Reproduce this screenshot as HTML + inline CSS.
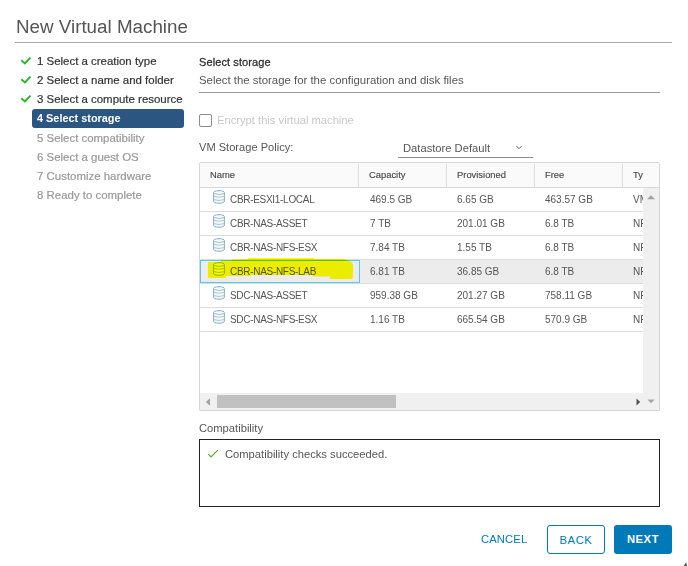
<!DOCTYPE html>
<html>
<head>
<meta charset="utf-8">
<style>
html,body{margin:0;padding:0;background:#fff;}
body{width:688px;height:566px;position:relative;overflow:hidden;font-family:"Liberation Sans",sans-serif;color:#565656;}
.a{position:absolute;white-space:nowrap;line-height:1;}
.title{left:16px;top:18px;font-size:18.8px;color:#555;}
.hr1{position:absolute;left:15px;top:42px;width:657px;height:1px;background:#a8a8a8;}
.nav{left:37px;font-size:11.45px;color:#333;-webkit-text-stroke:0.2px currentColor;}
.nav.dis{color:#999;}
.chk{position:absolute;left:20px;width:12px;height:9px;}
.active{position:absolute;left:32px;top:109px;width:152px;height:19px;background:#2b5681;border-radius:3px;}
.nav.act{color:#fff;font-weight:bold;font-size:10.9px;-webkit-text-stroke:0;}
.h2{left:199px;top:57px;font-size:11px;letter-spacing:0.1px;color:#333;-webkit-text-stroke:0.3px #333;}
.sub{left:199px;top:75px;font-size:11.4px;color:#565656;}
.hr2{position:absolute;left:199px;top:92px;width:461px;height:1px;background:#9a9a9a;}
.cb{position:absolute;left:199px;top:114px;width:11px;height:11px;border:1px solid #8c8c8c;border-radius:2px;}
.enc{left:217px;top:115px;font-size:11.2px;color:#c8c8c8;}
.pol{left:199px;top:142px;font-size:11.1px;color:#565656;}
.dd{left:403px;top:143px;font-size:11.2px;color:#565656;}
.ddl{position:absolute;left:398px;top:157px;width:135px;height:1px;background:#8c8c8c;}
.tbl{position:absolute;left:199px;top:162px;width:459px;height:247px;border:1px solid #d7d7d7;border-radius:2px 2px 0 0;overflow:hidden;background:#fff;}
.theadbg{position:absolute;left:0;top:0;width:459px;height:24px;background:#fafafa;border-bottom:1px solid #d7d7d7;}
.thead{position:absolute;left:0;top:0;width:443px;overflow:hidden;height:24px;background:#fafafa;border-bottom:1px solid #d7d7d7;}
.th{position:absolute;top:7px;font-size:9.4px;color:#4a4a4a;-webkit-text-stroke:0.15px #4a4a4a;line-height:1;white-space:nowrap;}
.vd{position:absolute;top:1px;width:1px;height:23px;background:#dcdcdc;}
.row{position:absolute;left:0;width:459px;height:23px;border-bottom:1px solid #dcdcdc;}
.td{position:absolute;top:7px;font-size:10px;letter-spacing:-0.3px;color:#565656;line-height:1;white-space:nowrap;}
.ico{position:absolute;left:13px;top:2px;width:12px;height:14px;}
.vs{position:absolute;left:443px;top:25px;width:16px;height:206px;background:#f0f0f0;}
.hs{position:absolute;left:0;top:230px;width:459px;height:17px;background:#f0f0f0;}
.thumb{position:absolute;left:17px;top:2px;width:179px;height:13px;background:#c1c1c1;}
.clbl{left:199px;top:423px;font-size:11.2px;color:#565656;}
.cbox{position:absolute;left:199px;top:439px;width:459px;height:66px;border:1px solid #222;}
.ctext{left:225px;top:448.5px;font-size:11.2px;color:#565656;}
.btn{position:absolute;top:525px;height:29px;border-radius:3px;box-sizing:border-box;font-size:11.2px;letter-spacing:0.6px;line-height:28px;text-align:center;}
</style>
</head>
<body>
<div class="a title">New Virtual Machine</div>
<div class="hr1"></div>

<!-- nav -->
<svg class="chk" style="top:56px" viewBox="0 0 12 9"><path d="M1.3 4.2 L4.9 7.4 L10.5 1.6" stroke="#2fb32f" stroke-width="2" fill="none"/></svg>
<svg class="chk" style="top:75px" viewBox="0 0 12 9"><path d="M1.3 4.2 L4.9 7.4 L10.5 1.6" stroke="#2fb32f" stroke-width="2" fill="none"/></svg>
<svg class="chk" style="top:94px" viewBox="0 0 12 9"><path d="M1.3 4.2 L4.9 7.4 L10.5 1.6" stroke="#2fb32f" stroke-width="2" fill="none"/></svg>
<div class="a nav" style="top:56px">1 Select a creation type</div>
<div class="a nav" style="top:75px">2 Select a name and folder</div>
<div class="a nav" style="top:94px">3 Select a compute resource</div>
<div class="active"></div>
<div class="a nav act" style="top:113px">4 Select storage</div>
<div class="a nav dis" style="top:133px">5 Select compatibility</div>
<div class="a nav dis" style="top:152px">6 Select a guest OS</div>
<div class="a nav dis" style="top:171px">7 Customize hardware</div>
<div class="a nav dis" style="top:190px">8 Ready to complete</div>

<!-- content -->
<div class="a h2">Select storage</div>
<div class="a sub">Select the storage for the configuration and disk files</div>
<div class="hr2"></div>
<div class="cb"></div>
<div class="a enc">Encrypt this virtual machine</div>
<div class="a pol">VM Storage Policy:</div>
<div class="a dd">Datastore Default</div>
<svg style="position:absolute;left:515px;top:145px" width="8" height="5" viewBox="0 0 8 5"><path d="M1.5 1.2 L4 3.7 L6.5 1.2" stroke="#666" stroke-width="1" fill="none"/></svg>
<div class="ddl"></div>

<div class="tbl">
  <div class="theadbg"></div>
  <div class="thead">
    <div class="th" style="left:10px">Name</div>
    <div class="vd" style="left:158px"></div>
    <div class="th" style="left:169px">Capacity</div>
    <div class="vd" style="left:246px"></div>
    <div class="th" style="left:257px">Provisioned</div>
    <div class="vd" style="left:334px"></div>
    <div class="th" style="left:345px">Free</div>
    <div class="vd" style="left:422px"></div>
    <div class="th" style="left:433px">Typ</div>
  </div>
  <div class="row" style="top:25px;">
    <svg class="ico" viewBox="0 0 12 14"><path d="M0.6 2.8 Q0.6 0.7 6 0.7 Q11.4 0.7 11.4 2.8 L11.4 11 Q11.4 13.2 6 13.2 Q0.6 13.2 0.6 11 Z" fill="#f6f9fb" stroke="#8eaec2" stroke-width="1"/><path d="M1 3.6 Q6 5.4 11 3.6" fill="none" stroke="#9ab8ca" stroke-width="0.9"/><path d="M1 6.4 Q6 8.2 11 6.4" fill="none" stroke="#a5bfcf" stroke-width="0.9"/><path d="M1 9.6 Q6 11.4 11 9.6" fill="none" stroke="#a5bfcf" stroke-width="0.9"/></svg>
    <div class="td" style="left:30px">CBR-ESXI1-LOCAL</div>
    <div class="td" style="left:170px;letter-spacing:0">469.5 GB</div>
    <div class="td" style="left:257px;letter-spacing:0">6.65 GB</div>
    <div class="td" style="left:345px;letter-spacing:0">463.57 GB</div>
    <div class="td" style="left:433px;letter-spacing:0">VMFS</div>
  </div>
  <div class="row" style="top:49px;">
    <svg class="ico" viewBox="0 0 12 14"><path d="M0.6 2.8 Q0.6 0.7 6 0.7 Q11.4 0.7 11.4 2.8 L11.4 11 Q11.4 13.2 6 13.2 Q0.6 13.2 0.6 11 Z" fill="#f6f9fb" stroke="#8eaec2" stroke-width="1"/><path d="M1 3.6 Q6 5.4 11 3.6" fill="none" stroke="#9ab8ca" stroke-width="0.9"/><path d="M1 6.4 Q6 8.2 11 6.4" fill="none" stroke="#a5bfcf" stroke-width="0.9"/><path d="M1 9.6 Q6 11.4 11 9.6" fill="none" stroke="#a5bfcf" stroke-width="0.9"/></svg>
    <div class="td" style="left:30px">CBR-NAS-ASSET</div>
    <div class="td" style="left:170px;letter-spacing:0">7 TB</div>
    <div class="td" style="left:257px;letter-spacing:0">201.01 GB</div>
    <div class="td" style="left:345px;letter-spacing:0">6.8 TB</div>
    <div class="td" style="left:433px;letter-spacing:0">NFS</div>
  </div>
  <div class="row" style="top:73px;">
    <svg class="ico" viewBox="0 0 12 14"><path d="M0.6 2.8 Q0.6 0.7 6 0.7 Q11.4 0.7 11.4 2.8 L11.4 11 Q11.4 13.2 6 13.2 Q0.6 13.2 0.6 11 Z" fill="#f6f9fb" stroke="#8eaec2" stroke-width="1"/><path d="M1 3.6 Q6 5.4 11 3.6" fill="none" stroke="#9ab8ca" stroke-width="0.9"/><path d="M1 6.4 Q6 8.2 11 6.4" fill="none" stroke="#a5bfcf" stroke-width="0.9"/><path d="M1 9.6 Q6 11.4 11 9.6" fill="none" stroke="#a5bfcf" stroke-width="0.9"/></svg>
    <div class="td" style="left:30px">CBR-NAS-NFS-ESX</div>
    <div class="td" style="left:170px;letter-spacing:0">7.84 TB</div>
    <div class="td" style="left:257px;letter-spacing:0">1.55 TB</div>
    <div class="td" style="left:345px;letter-spacing:0">6.8 TB</div>
    <div class="td" style="left:433px;letter-spacing:0">NFS</div>
  </div>
  <div class="row" style="top:97px;background:#ececec;">
    <svg class="ico" viewBox="0 0 12 14"><path d="M0.6 2.8 Q0.6 0.7 6 0.7 Q11.4 0.7 11.4 2.8 L11.4 11 Q11.4 13.2 6 13.2 Q0.6 13.2 0.6 11 Z" fill="#f6f9fb" stroke="#8eaec2" stroke-width="1"/><path d="M1 3.6 Q6 5.4 11 3.6" fill="none" stroke="#9ab8ca" stroke-width="0.9"/><path d="M1 6.4 Q6 8.2 11 6.4" fill="none" stroke="#a5bfcf" stroke-width="0.9"/><path d="M1 9.6 Q6 11.4 11 9.6" fill="none" stroke="#a5bfcf" stroke-width="0.9"/></svg>
    <div class="td" style="left:30px">CBR-NAS-NFS-LAB</div>
    <div class="td" style="left:170px;letter-spacing:0">6.81 TB</div>
    <div class="td" style="left:257px;letter-spacing:0">36.85 GB</div>
    <div class="td" style="left:345px;letter-spacing:0">6.8 TB</div>
    <div class="td" style="left:433px;letter-spacing:0">NFS</div>
  </div>
  <div class="row" style="top:121px;">
    <svg class="ico" viewBox="0 0 12 14"><path d="M0.6 2.8 Q0.6 0.7 6 0.7 Q11.4 0.7 11.4 2.8 L11.4 11 Q11.4 13.2 6 13.2 Q0.6 13.2 0.6 11 Z" fill="#f6f9fb" stroke="#8eaec2" stroke-width="1"/><path d="M1 3.6 Q6 5.4 11 3.6" fill="none" stroke="#9ab8ca" stroke-width="0.9"/><path d="M1 6.4 Q6 8.2 11 6.4" fill="none" stroke="#a5bfcf" stroke-width="0.9"/><path d="M1 9.6 Q6 11.4 11 9.6" fill="none" stroke="#a5bfcf" stroke-width="0.9"/></svg>
    <div class="td" style="left:30px">SDC-NAS-ASSET</div>
    <div class="td" style="left:170px;letter-spacing:0">959.38 GB</div>
    <div class="td" style="left:257px;letter-spacing:0">201.27 GB</div>
    <div class="td" style="left:345px;letter-spacing:0">758.11 GB</div>
    <div class="td" style="left:433px;letter-spacing:0">NFS</div>
  </div>
  <div class="row" style="top:145px;">
    <svg class="ico" viewBox="0 0 12 14"><path d="M0.6 2.8 Q0.6 0.7 6 0.7 Q11.4 0.7 11.4 2.8 L11.4 11 Q11.4 13.2 6 13.2 Q0.6 13.2 0.6 11 Z" fill="#f6f9fb" stroke="#8eaec2" stroke-width="1"/><path d="M1 3.6 Q6 5.4 11 3.6" fill="none" stroke="#9ab8ca" stroke-width="0.9"/><path d="M1 6.4 Q6 8.2 11 6.4" fill="none" stroke="#a5bfcf" stroke-width="0.9"/><path d="M1 9.6 Q6 11.4 11 9.6" fill="none" stroke="#a5bfcf" stroke-width="0.9"/></svg>
    <div class="td" style="left:30px">SDC-NAS-NFS-ESX</div>
    <div class="td" style="left:170px;letter-spacing:0">1.16 TB</div>
    <div class="td" style="left:257px;letter-spacing:0">665.54 GB</div>
    <div class="td" style="left:345px;letter-spacing:0">570.9 GB</div>
    <div class="td" style="left:433px;letter-spacing:0">NFS</div>
  </div>
  <div class="sel" style="position:absolute;left:0;top:97px;width:158px;height:21px;border:1px solid #55c8f0;"></div>
  <div class="vs"><svg style="position:absolute;left:4px;top:7px" width="8" height="5" viewBox="0 0 8 5"><path d="M0 4.2 L4 0.2 L8 4.2 Z" fill="#a3a3a3"/></svg></div>
  <div class="hs"><div class="thumb"></div><svg style="position:absolute;left:5px;top:5px" width="6" height="8" viewBox="0 0 6 8"><path d="M5 0.3 L0.8 4 L5 7.7 Z" fill="#a3a3a3"/></svg><svg style="position:absolute;left:436px;top:5px" width="5" height="8" viewBox="0 0 5 8"><path d="M0.5 0.5 L4.2 4 L0.5 7.5 Z" fill="#505050"/></svg><svg style="position:absolute;left:447px;top:6px" width="8" height="5" viewBox="0 0 8 5"><path d="M0.5 0.5 L4 4.2 L7.5 0.5 Z" fill="#a3a3a3"/></svg></div>
</div>

<svg style="position:absolute;left:0;top:0;mix-blend-mode:multiply;pointer-events:none" width="688" height="566"><path d="M208 262 L221 262 L221 260.6 L232 260.6 L232 259.5 L248 259.3 L248 258 L314 258 L314 259 L344 259 L348 260.5 L351.5 262 L353 265 L353 272 L352.5 279 L330 279 L330 276.6 L313 276.6 L313 275 L250 275 L250 276 L226 276 L226 278 L208 278 Z" fill="#ffff00"/></svg>
<div class="a clbl">Compatibility</div>
<div class="cbox"></div>
<svg style="position:absolute;left:207px;top:449px" width="12" height="10" viewBox="0 0 12 10"><path d="M1.3 5.2 L4 8 L10.8 1.2" stroke="#5ea832" stroke-width="1.2" fill="none"/></svg>
<div class="a ctext">Compatibility checks succeeded.</div>

<div class="a" style="left:481px;top:534px;font-size:11.2px;letter-spacing:0.15px;color:#0079b8">CANCEL</div>
<div class="btn" style="left:547px;width:58px;border:1px solid #0079b8;color:#0079b8;background:#fff">BACK</div>
<div class="btn" style="left:614px;width:58px;background:#0079b8;color:#fff;font-weight:bold">NEXT</div>
<svg style="position:absolute;left:683px;top:562px" width="5" height="4" viewBox="0 0 5 4"><path d="M3.2 0.3 L4 4 L0.5 4 Z" fill="#555"/></svg>
</body>
</html>
